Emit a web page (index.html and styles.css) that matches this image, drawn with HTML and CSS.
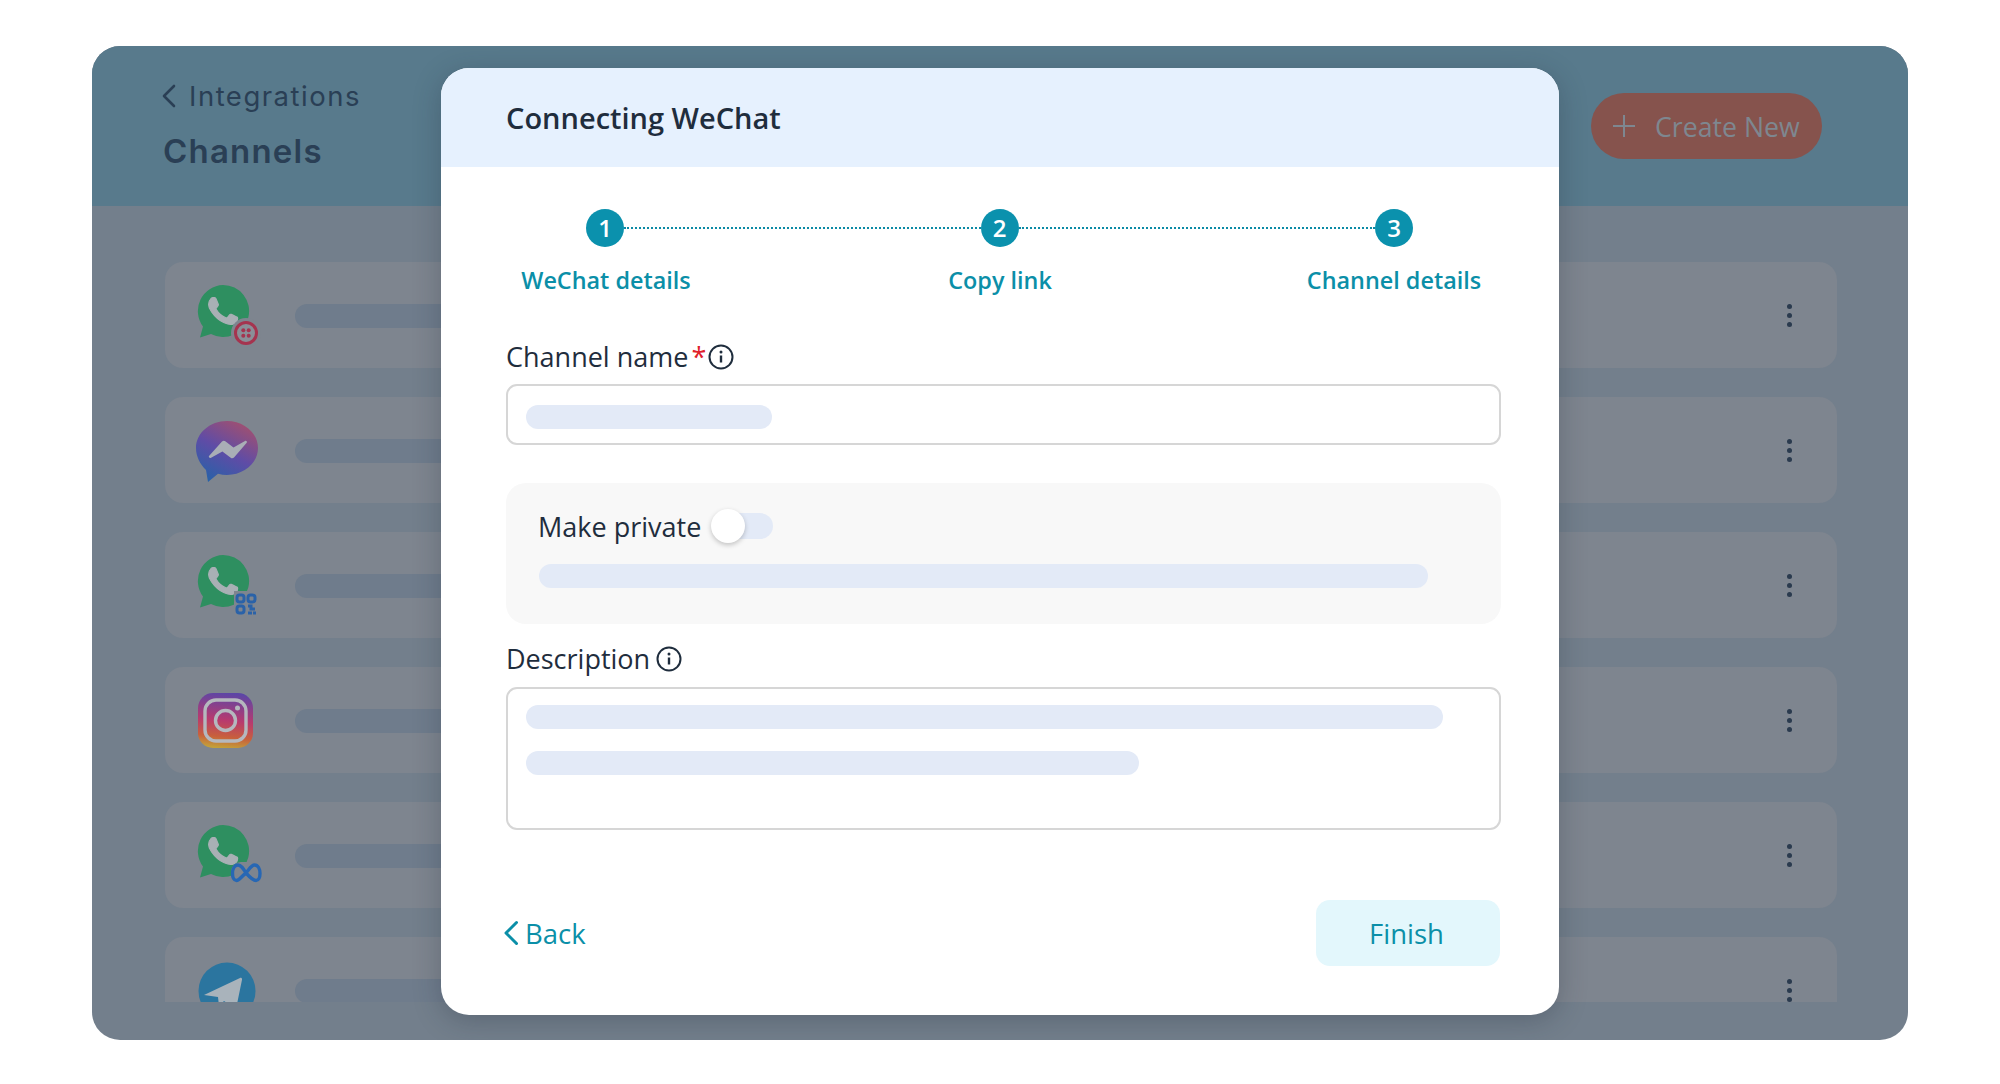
FILE: index.html
```html
<!DOCTYPE html>
<html lang="en">
<head>
<meta charset="utf-8">
<title>Connecting WeChat</title>
<link rel="stylesheet" href="styles.css">
</head>
<body>
<svg class="defs" width="0" height="0" aria-hidden="true">
  <defs>
    <symbol id="wa" viewBox="0 0 100 106">
      <path fill="#2e8f60" d="M58 23a26 26 0 1 1-12 49L35 75.500l3-11A26 26 0 0 1 58 23Z"/>
      <g transform="translate(29.2 20.200) scale(2.400)" fill="#a9b0b5" stroke="#a9b0b5" stroke-width="0.500">
        <path d="M17.472 14.382c-.297-.149-1.758-.867-2.03-.967-.273-.099-.471-.148-.67.15-.197.297-.767.966-.94 1.164-.173.199-.347.223-.644.075-.297-.15-1.255-.463-2.39-1.475-.883-.788-1.48-1.761-1.653-2.059-.173-.297-.018-.458.13-.606.134-.133.298-.347.446-.52.149-.174.198-.298.298-.497.099-.198.05-.371-.025-.52-.075-.149-.669-1.612-.916-2.207-.242-.579-.487-.5-.669-.51-.173-.008-.371-.01-.57-.01-.198 0-.52.074-.792.372-.272.297-1.04 1.016-1.04 2.479 0 1.462 1.065 2.875 1.213 3.074.149.198 2.096 3.2 5.077 4.487.709.306 1.262.489 1.694.625.712.227 1.36.195 1.871.118.571-.085 1.758-.719 2.006-1.413.248-.694.248-1.289.173-1.413-.074-.124-.272-.198-.57-.347"/>
      </g>
    </symbol>
    <linearGradient id="msg" x1="0.75" y1="0" x2="0.2" y2="1">
      <stop offset="0" stop-color="#a2506f"/>
      <stop offset="0.5" stop-color="#5f4ca6"/>
      <stop offset="1" stop-color="#2662a8"/>
    </linearGradient>
    <linearGradient id="ig" x1="0.45" y1="1" x2="0.55" y2="0">
      <stop offset="0" stop-color="#c2a03a"/>
      <stop offset="0.2" stop-color="#c8603c"/>
      <stop offset="0.5" stop-color="#b83a6e"/>
      <stop offset="1" stop-color="#5c46a6"/>
    </linearGradient>
  </defs>
</svg>

<main class="panel">
  <header class="panel-head">
    <div class="crumbs">
      <a class="crumb">
        <svg class="crumb-chevron" width="14" height="24" viewBox="0 0 14 24"><path d="M12 2 2 12l10 10" fill="none" stroke="#2a3f55" stroke-width="2.600" stroke-linecap="round" stroke-linejoin="round"/></svg>
        <span>Integrations</span>
      </a>
      <h1 class="page-title">Channels</h1>
    </div>
    <button class="create-btn">
      <svg width="24" height="24" viewBox="0 0 24 24"><path d="M12 1v22M1 12h22" stroke="#7e8790" stroke-width="2" fill="none"/></svg>
      <span>Create New</span>
    </button>
  </header>

  <section class="list">
    <article class="row">
      <svg class="row-icon" viewBox="0 0 100 106">
        <use href="#wa"/>
        <circle cx="81" cy="71" r="15" fill="#7e858f"/>
        <circle cx="81" cy="71" r="10.500" fill="#8a8f98" stroke="#a5344f" stroke-width="3"/>
        <g fill="#a5344f"><circle cx="78.300" cy="68.300" r="2"/><circle cx="83.700" cy="68.300" r="2"/><circle cx="78.300" cy="73.700" r="2"/><circle cx="83.700" cy="73.700" r="2"/></g>
      </svg>
      <div class="bar"></div>
      <div class="dots"><i></i><i></i><i></i></div>
    </article>
    <article class="row">
      <svg class="row-icon" viewBox="0 0 100 106">
        <path fill="url(#msg)" d="M62 24c17 0 31 12 31 27S79 78 62 78c-3 0-6-.4-9-1.200l-10 8.200-2-12C35 67 31 59.500 31 51c0-15 14-27 31-27Z"/>
        <path fill="#a9aeb6" d="M44 59 57 44.500c1-1 2.200-1.100 3.300-.3l8.200 6.300 11.500-6.500c1.300-.7 2.600.7 1.700 1.800L69 60.500c-1 1-2.200 1.100-3.300.3l-8.300-6.300-11.300 6.300c-1.300.7-2.900-.7-2.100-1.800Z"/>
      </svg>
      <div class="bar"></div>
      <div class="dots"><i></i><i></i><i></i></div>
    </article>
    <article class="row">
      <svg class="row-icon" viewBox="0 0 100 106">
        <use href="#wa"/>
        <rect x="69" y="59" width="25" height="26" fill="#7e858f"/>
        <g fill="none" stroke="#2a62a8" stroke-width="3">
          <rect x="72" y="63" width="7" height="7" rx="2.500"/><rect x="83" y="63" width="7" height="7" rx="2.500"/><rect x="72" y="74" width="7" height="7" rx="2.500"/>
          <path d="M83 74h3v3h4M83 81h4M88 81h3"/>
        </g>
      </svg>
      <div class="bar"></div>
      <div class="dots"><i></i><i></i><i></i></div>
    </article>
    <article class="row">
      <svg class="row-icon" viewBox="0 0 100 106">
        <rect x="33" y="26" width="55" height="55" rx="15" fill="url(#ig)"/>
        <rect x="40" y="33" width="41" height="41" rx="11" fill="none" stroke="#b5b8be" stroke-width="3.400"/>
        <circle cx="60.500" cy="53.500" r="10" fill="none" stroke="#b5b8be" stroke-width="3.400"/>
        <circle cx="72.500" cy="41" r="2.500" fill="#b5b8be"/>
      </svg>
      <div class="bar"></div>
      <div class="dots"><i></i><i></i><i></i></div>
    </article>
    <article class="row">
      <svg class="row-icon" viewBox="0 0 100 106">
        <use href="#wa"/>
        <rect x="66" y="60" width="30" height="24" rx="10" fill="#7e858f"/>
        <path fill="none" stroke="#2767b4" stroke-width="3.400" stroke-linejoin="round" d="M81 71c-3-5-5-8-8-8-3.500 0-5.500 4-5.500 8.500 0 4 1.500 7 4 7 3 0 5.500-5 9.500-7.500 4-5 5.500-8 8.500-8 3.500 0 5.500 4 5.500 8.500 0 4-1.500 7-4 7-3 0-6-3-10-7.500Z"/>
      </svg>
      <div class="bar"></div>
      <div class="dots"><i></i><i></i><i></i></div>
    </article>
    <article class="row">
      <svg class="row-icon" viewBox="0 0 100 106">
        <circle cx="62" cy="54" r="28.500" fill="#2b759f"/>
        <path fill="#a9b3bb" d="M39 58 75 41c1.200-.5 2.300.4 2 1.700L71 72 59 64l-5 5-1-9Z"/>
      </svg>
      <div class="bar"></div>
      <div class="dots"><i></i><i></i><i></i></div>
    </article>
  </section>

  <div class="modal">
    <div class="modal-head">Connecting WeChat</div>
    <div class="modal-body">
      <div class="track">
        <span class="step-dot">1</span><span class="step-line"></span>
        <span class="step-dot">2</span><span class="step-line"></span>
        <span class="step-dot">3</span>
      </div>
      <div class="step-labels">
        <span>WeChat details</span><span>Copy link</span><span>Channel details</span>
      </div>

      <label class="field-label field-label-first">
        <span>Channel name</span><span class="req">*</span>
        <svg class="info" width="26" height="26" viewBox="0 0 26 26"><circle cx="13" cy="13" r="11.500" fill="none" stroke="#1f2d3d" stroke-width="2"/><circle cx="13" cy="8" r="1.500" fill="#1f2d3d"/><path d="M13 11.500v7" stroke="#1f2d3d" stroke-width="2.400"/></svg>
      </label>
      <div class="input"><div class="skeleton skeleton-name"></div></div>

      <div class="private-box">
        <div class="private-line">
          <span>Make private</span>
          <span class="toggle"><span class="knob"></span></span>
        </div>
        <div class="skeleton skeleton-private"></div>
      </div>

      <label class="field-label field-label-desc">
        <span>Description</span>
        <svg class="info" width="26" height="26" viewBox="0 0 26 26"><circle cx="13" cy="13" r="11.500" fill="none" stroke="#1f2d3d" stroke-width="2"/><circle cx="13" cy="8" r="1.500" fill="#1f2d3d"/><path d="M13 11.500v7" stroke="#1f2d3d" stroke-width="2.400"/></svg>
      </label>
      <div class="textarea">
        <div class="skeleton skeleton-desc1"></div>
        <div class="skeleton skeleton-desc2"></div>
      </div>

      <div class="modal-foot">
        <a class="back">
          <svg width="16" height="26" viewBox="0 0 16 26"><path d="M13.500 2.500 3 13l10.500 10.500" fill="none" stroke="#0b8fa8" stroke-width="3" stroke-linecap="round" stroke-linejoin="round"/></svg>
          <span>Back</span>
        </a>
        <button class="finish">Finish</button>
      </div>
    </div>
  </div>
</main>
</body>
</html>
```

FILE: styles.css
```css
* { box-sizing: border-box; }

html, body { margin: 0; height: 100%; }

body {
  background: #fff;
  padding: 46px 92px 44px;
  font-family: "Open Sans", "Liberation Sans", sans-serif;
  color: #1f2d3d;
  overflow: hidden;
}

.defs { position: absolute; }

.panel {
  position: relative;
  display: flex;
  flex-direction: column;
  width: 1816px;
  height: 994px;
  background: #737f8c;
  border-radius: 28px;
  overflow: hidden;
}

.panel-head {
  display: flex;
  justify-content: space-between;
  height: 160px;
  flex: none;
  background: #587a8c;
  padding: 32px 86px 0 70px;
  color: #2a3f55;
}

.crumb {
  display: flex;
  align-items: center;
  gap: 13px;
  font-family: "Inter", sans-serif;
  font-size: 27.500px;
  letter-spacing: 1.500px;
  line-height: 36px;
}

.crumb-chevron { flex: none; }

.page-title {
  margin: 15px 0 0 1px;
  font-family: "Inter", sans-serif;
  font-size: 33px;
  letter-spacing: 1.200px;
  line-height: 44px;
  font-weight: 600;
}

.create-btn {
  display: flex;
  align-items: center;
  gap: 19px;
  width: 231px;
  height: 66px;
  margin-top: 15px;
  padding: 0 0 0 21px;
  border: 0;
  border-radius: 33px;
  background: #86534d;
  color: #7e8790;
  font: 400 26.700px "Open Sans", sans-serif;
}

.list {
  flex: 1;
  display: flex;
  flex-direction: column;
  gap: 29px;
  margin: 56px 71px 38px 73px;
  overflow: hidden;
}

.row {
  display: flex;
  align-items: center;
  flex: none;
  height: 106px;
  background: #7e858f;
  border-radius: 18px;
}

.row-icon { width: 100px; height: 106px; flex: none; }

.bar {
  width: 300px;
  height: 24px;
  margin: 1px 0 0 30px;
  background: #6f7c8c;
  border-radius: 12px;
}

.dots {
  display: flex;
  flex-direction: column;
  gap: 4px;
  margin-left: auto;
  margin-right: 45px;
}

.dots i {
  width: 5px;
  height: 5px;
  border-radius: 50%;
  background: #2a3a4e;
}

.modal {
  position: absolute;
  top: 22px;
  left: 349px;
  width: 1118px;
  height: 947px;
  background: #fff;
  border-radius: 28px;
  overflow: hidden;
  box-shadow: 0 6px 28px rgba(30, 40, 55, 0.28);
}

.modal-head {
  height: 99px;
  padding-left: 65px;
  background: #e6f1fe;
  font-size: 29px;
  font-weight: 600;
  line-height: 100px;
  color: #1f2d3d;
}

.modal-body { padding: 42px 58px 49px 65px; }

.track {
  display: flex;
  align-items: center;
  margin: 0 88px 0 80px;
}

.step-dot {
  flex: none;
  width: 38px;
  height: 38px;
  border-radius: 50%;
  background: #0b91ad;
  color: #fff;
  font-size: 24px;
  font-weight: 600;
  line-height: 38px;
  text-align: center;
}

.step-line {
  flex: 1;
  margin-top: -1px;
  border-top: 2px dotted #0b8aa5;
}

.step-labels {
  display: flex;
  justify-content: space-between;
  margin: 18px 17px 0 10px;
  color: #0b8fa8;
  font-size: 23.400px;
  font-weight: 600;
  line-height: 30px;
}

.step-labels span { width: 180px; text-align: center; white-space: nowrap; }

.field-label {
  display: flex;
  align-items: center;
  height: 36px;
  font-size: 27px;
  line-height: 36px;
}

.field-label-first { margin-top: 44px; }
.field-label-desc { margin-top: 17px; }

.req { margin-left: 3px; color: #e0202b; }

.info { margin-left: 2px; }
.field-label-desc .info { margin-left: 6px; }

.input, .textarea {
  border: 2px solid #d6d6d6;
  border-radius: 11px;
  background: #fff;
  padding-left: 18px;
}

.input { height: 61px; margin-top: 9px; padding-top: 19px; }
.textarea { height: 143px; margin-top: 10px; padding-top: 16px; }

.skeleton {
  height: 24px;
  background: #e3eaf7;
  border-radius: 12px;
}

.skeleton-name { width: 246px; }
.skeleton-desc1 { width: 917px; }
.skeleton-desc2 { width: 613px; margin-top: 22px; }

.private-box {
  height: 141px;
  margin-top: 38px;
  padding: 25px 33px 0;
  background: #f8f8f8;
  border-radius: 20px;
}

.private-line {
  display: flex;
  align-items: center;
  height: 36px;
  margin-left: -1px;
  font-size: 27px;
}

.toggle {
  position: relative;
  width: 60px;
  height: 26px;
  margin-left: 12px;
  background: #e3eaf7;
  border-radius: 13px;
}

.knob {
  position: absolute;
  top: -4px;
  left: -2px;
  width: 34px;
  height: 34px;
  background: #fff;
  border-radius: 50%;
  box-shadow: 0 2px 5px rgba(0, 0, 0, 0.22);
}

.skeleton-private { width: 889px; margin-top: 20px; }

.modal-foot {
  display: flex;
  align-items: center;
  justify-content: space-between;
  margin-top: 70px;
}

.back {
  display: flex;
  align-items: center;
  gap: 6px;
  margin-left: -3px;
  color: #0b8fa8;
  font-size: 27.500px;
}

.finish {
  width: 184px;
  height: 66px;
  margin-right: 1px;
  padding: 0 3px 0 0;
  border: 0;
  border-radius: 14px;
  background: #e3f7fc;
  color: #0b8fa8;
  font: 400 27.500px "Open Sans", sans-serif;
}
```
